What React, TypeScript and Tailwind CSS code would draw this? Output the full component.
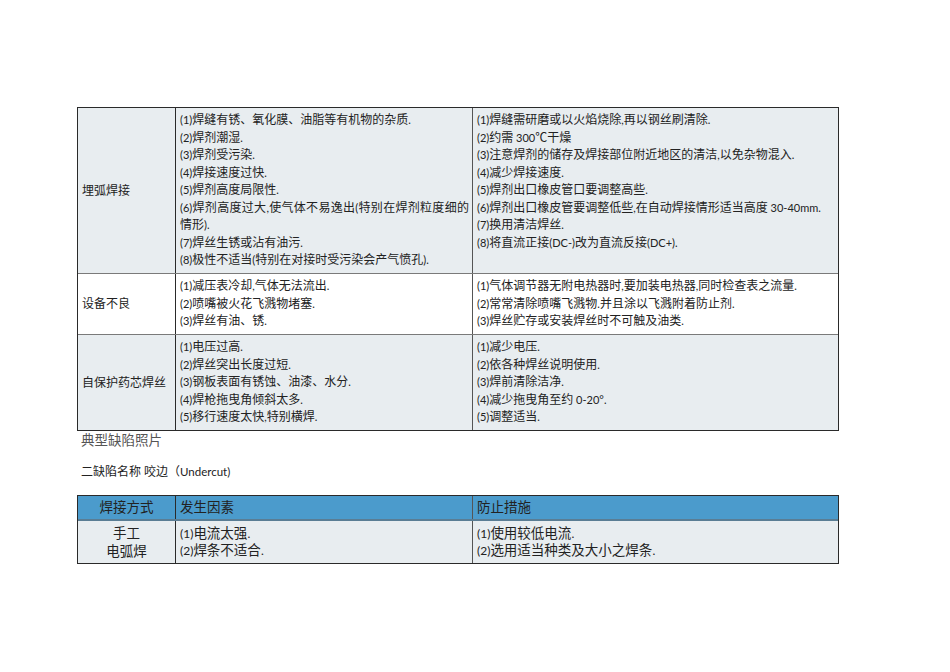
import React from "react";

const font = "font-['Lato','Noto_Sans_CJK_SC',sans-serif]";

function Mixed({ text, latin }: { text: string; latin: string }) {
  const parts = text.split(/([\x00-\x7F°]+)/);
  return (
    <>
      {parts.map((p, i) =>
        p === "" ? null : /^[\x00-\x7F°]+$/.test(p) ? (
          <span key={i} className={latin}>
            {p}
          </span>
        ) : (
          <span key={i}>{p}</span>
        )
      )}
    </>
  );
}

function Lines({ items }: { items: string[] }) {
  return (
    <div className="flex flex-col">
      {items.map((t, i) => (
        <div key={i} className="leading-[17.5px] text-justify">
          <Mixed text={t} latin="text-[11px]" />
        </div>
      ))}
    </div>
  );
}

export default function App() {
  const rows = [
    {
      name: "埋弧焊接",
      bg: "bg-[#e8edf0]",
      cause: [
        "(1)焊缝有锈、氧化膜、油脂等有机物的杂质.",
        "(2)焊剂潮湿.",
        "(3)焊剂受污染.",
        "(4)焊接速度过快.",
        "(5)焊剂高度局限性.",
        "(6)焊剂高度过大,使气体不易逸出(特别在焊剂粒度细的情形).",
        "(7)焊丝生锈或沾有油污.",
        "(8)极性不适当(特别在对接时受污染会产气愤孔).",
      ],
      fix: [
        "(1)焊缝需研磨或以火焰烧除,再以钢丝刷清除.",
        "(2)约需 300℃干燥",
        "(3)注意焊剂的储存及焊接部位附近地区的清洁,以免杂物混入.",
        "(4)减少焊接速度.",
        "(5)焊剂出口橡皮管口要调整高些.",
        "(6)焊剂出口橡皮管要调整低些,在自动焊接情形适当高度 30-40mm.",
        "(7)换用清洁焊丝.",
        "(8)将直流正接(DC-)改为直流反接(DC+).",
      ],
      h: "h-[165px]",
    },
    {
      name: "设备不良",
      bg: "bg-white",
      cause: ["(1)减压表冷却,气体无法流出.", "(2)喷嘴被火花飞溅物堵塞.", "(3)焊丝有油、锈."],
      fix: [
        "(1)气体调节器无附电热器时,要加装电热器,同时检查表之流量.",
        "(2)常常清除喷嘴飞溅物.并且涂以飞溅附着防止剂.",
        "(3)焊丝贮存或安装焊丝时不可触及油类.",
      ],
      h: "h-[61px]",
    },
    {
      name: "自保护药芯焊丝",
      bg: "bg-[#e8edf0]",
      cause: [
        "(1)电压过高.",
        "(2)焊丝突出长度过短.",
        "(3)钢板表面有锈蚀、油漆、水分.",
        "(4)焊枪拖曳角倾斜太多.",
        "(5)移行速度太快,特别横焊.",
      ],
      fix: ["(1)减少电压.", "(2)依各种焊丝说明使用.", "(3)焊前清除洁净.", "(4)减少拖曳角至约 0-20°.", "(5)调整适当."],
      h: "h-[96px]",
    },
  ];

  return (
    <div className={`w-[950px] h-[672px] bg-white text-[#222] ${font}`}>
      <div className="pl-[77px] pt-[107px]">
        <div className="w-[762px] border-[1.5px] border-[#2a2a2a]">
          {rows.map((r, i) => (
            <div
              key={i}
              className={`grid grid-cols-[97px_297px_1fr] ${r.h} ${r.bg} ${i > 0 ? "border-t-[1.5px] border-[#7a7a7a]" : ""}`}
            >
              <div className="flex items-center pl-[4px] text-[12px]">{r.name}</div>
              <div className="border-l-[1.5px] border-[#2a2a2a] pl-[4px] pr-[3px] pt-[3px] text-[12px] flex items-start">
                <Lines items={r.cause} />
              </div>
              <div className="border-l-[1.5px] border-[#555] pl-[4px] pr-[3px] pt-[3px] text-[12px]">
                <Lines items={r.fix} />
              </div>
            </div>
          ))}
        </div>
        <div className="pl-[4px] pt-[1px] text-[13.5px] text-[#555] leading-[17px]">典型缺陷照片</div>
        <div className="pl-[4px] pt-[14px] text-[12px] text-[#222] leading-[17px]">
          <Mixed text="二缺陷名称 咬边（Undercut)" latin="text-[11.5px]" />
        </div>
        <div className="mt-[15px] w-[762px] border-[1.5px] border-[#2a2a2a]">
          <div className="grid grid-cols-[97px_297px_1fr] h-[25px] bg-[#4b9bcc] border-b-[2px] border-[#5a7d94] text-[13.5px] text-[#222]">
            <div className="flex items-center justify-center">焊接方式</div>
            <div className="flex items-center pl-[4px] border-l-[1.5px] border-[#2a2a2a]">发生因素</div>
            <div className="flex items-center pl-[4px] border-l-[1.5px] border-[#555]">防止措施</div>
          </div>
          <div className="grid grid-cols-[97px_297px_1fr] h-[42px] bg-[#e8edf0]">
            <div className="flex flex-col items-center justify-center text-[13.5px] leading-[18px]">
              <div>手工</div>
              <div>电弧焊</div>
            </div>
            <div className="flex flex-col justify-center pl-[4px] border-l-[1.5px] border-[#2a2a2a] text-[13.5px] leading-[17px]">
              <div><Mixed text="(1)电流太强." latin="text-[12px]" /></div>
              <div><Mixed text="(2)焊条不适合." latin="text-[12px]" /></div>
            </div>
            <div className="flex flex-col justify-center pl-[4px] border-l-[1.5px] border-[#555] text-[13.5px] leading-[17px]">
              <div><Mixed text="(1)使用较低电流." latin="text-[12px]" /></div>
              <div><Mixed text="(2)选用适当种类及大小之焊条." latin="text-[12px]" /></div>
            </div>
          </div>
        </div>
      </div>
    </div>
  );
}
